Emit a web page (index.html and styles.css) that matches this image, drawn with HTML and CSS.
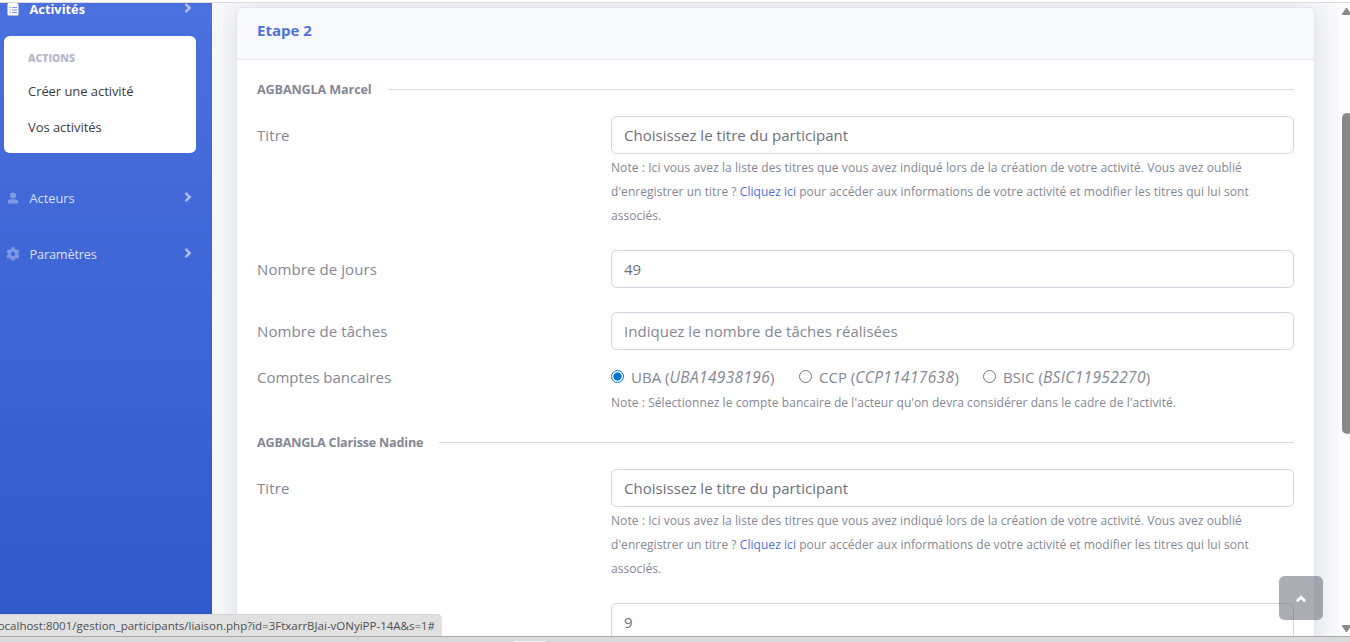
FILE: index.html
```html
<!DOCTYPE html>
<html lang="fr">
<head>
<meta charset="utf-8">
<title>Etape 2</title>
<link rel="stylesheet" href="styles.css">
</head>
<body>
<div class="window">
  <div class="page">
    <nav class="sidebar">
      <a class="nav-item active">
        <svg class="nav-icon" viewBox="0 0 12 14"><path fill="currentColor" d="M2 1h8a1.500 1.500 0 0 1 1.500 1.500v9.500a1.500 1.500 0 0 1-1.500 1.500H2A1.500 1.500 0 0 1 .5 12V2.500A1.500 1.500 0 0 1 2 1z"/><path stroke="#7d96e5" d="M2.500 5.500h1.300M5 5.500h5M2.500 8h1.300M5 8h5M2.500 10.500h1.300M5 10.500h5"/></svg>
        <span>Activités</span>
        <svg class="chevron" viewBox="0 0 8 12"><path d="M1.500 1.800 5.700 6l-4.200 4.200"/></svg>
      </a>
      <div class="submenu">
        <h6>ACTIONS</h6>
        <a>Créer une activité</a>
        <a>Vos activités</a>
      </div>
      <a class="nav-item acteurs">
        <svg class="nav-icon faded" viewBox="0 0 12 14"><circle cx="6" cy="4.500" r="3" fill="currentColor"/><path fill="currentColor" d="M.7 12.500v-1.300A3.200 3.200 0 0 1 3.900 8.200h4.200a3.200 3.200 0 0 1 3.200 3v1.300z"/></svg>
        <span>Acteurs</span>
        <svg class="chevron" viewBox="0 0 8 12"><path d="M1.500 1.800 5.700 6l-4.200 4.200"/></svg>
      </a>
      <a class="nav-item parametres">
        <svg class="nav-icon gear faded" viewBox="0 0 512 512"><path fill="currentColor" d="M487.400 315.700l-42.600-24.600c4.300-23.200 4.300-47 0-70.200l42.600-24.600c4.900-2.800 7.100-8.600 5.500-14-11.100-35.600-30-67.800-54.700-94.600-3.800-4.100-10-5.100-14.800-2.300L380.800 110c-17.900-15.400-38.500-27.300-60.800-35.100V25.800c0-5.600-3.900-10.500-9.400-11.700-36.700-8.200-74.300-7.800-109.200 0-5.500 1.200-9.400 6.100-9.400 11.700V75c-22.200 7.900-42.800 19.800-60.800 35.100L88.700 85.500c-4.900-2.800-11-1.900-14.800 2.300-24.700 26.700-43.600 58.900-54.700 94.600-1.700 5.400.6 11.200 5.500 14L67.300 221c-4.300 23.200-4.300 47 0 70.200l-42.600 24.600c-4.900 2.800-7.100 8.600-5.500 14 11.100 35.600 30 67.800 54.700 94.600 3.800 4.100 10 5.100 14.800 2.300l42.600-24.600c17.900 15.400 38.500 27.300 60.800 35.100v49.200c0 5.600 3.900 10.500 9.400 11.700 36.700 8.200 74.300 7.800 109.200 0 5.500-1.200 9.400-6.100 9.400-11.700v-49.200c22.200-7.900 42.800-19.800 60.800-35.100l42.600 24.600c4.900 2.800 11 1.900 14.800-2.300 24.700-26.700 43.600-58.900 54.700-94.600 1.500-5.500-.7-11.300-5.600-14.100zM256 336c-44.100 0-80-35.900-80-80s35.900-80 80-80 80 35.900 80 80-35.900 80-80 80z"/></svg>
        <span>Paramètres</span>
        <svg class="chevron" viewBox="0 0 8 12"><path d="M1.500 1.800 5.700 6l-4.200 4.200"/></svg>
      </a>
    </nav>
    <main class="content">
      <section class="card">
        <header class="card-header"><h2>Etape 2</h2></header>
        <div class="card-body">
          <div class="participant">
            <div class="divider"><b>AGBANGLA Marcel</b></div>
            <div class="row row-title">
              <label>Titre</label>
              <div>
                <div class="field select">Choisissez le titre du participant</div>
                <p class="note">Note : Ici vous avez la liste des titres que vous avez indiqué lors de la création de votre activité. Vous avez oublié<br><span class="second-line">d'enregistrer un titre ? <a>Cliquez ici</a> pour accéder aux informations de votre activité et modifier les titres qui lui sont</span><br>associés.</p>
              </div>
            </div>
            <div class="row row-days"><label>Nombre de jours</label><div class="field">49</div></div>
            <div class="row row-tasks"><label>Nombre de tâches</label><div class="field placeholder">Indiquez le nombre de tâches réalisées</div></div>
            <div class="row row-bank">
              <label class="bank-label">Comptes bancaires</label>
              <div>
                <div class="radios">
                  <span class="option uba"><i class="radio checked"></i><span>UBA (<em>UBA14938196</em>)</span></span>
                  <span class="option ccp"><i class="radio"></i><span>CCP (<em>CCP11417638</em>)</span></span>
                  <span class="option bsic"><i class="radio"></i><span>BSIC (<em>BSIC11952270</em>)</span></span>
                </div>
                <p class="note">Note : Sélectionnez le compte bancaire de l'acteur qu'on devra considérer dans le cadre de l'activité.</p>
              </div>
            </div>
          </div>
          <div class="participant">
            <div class="divider long"><b>AGBANGLA Clarisse Nadine</b></div>
            <div class="row row-title">
              <label>Titre</label>
              <div>
                <div class="field select">Choisissez le titre du participant</div>
                <p class="note">Note : Ici vous avez la liste des titres que vous avez indiqué lors de la création de votre activité. Vous avez oublié<br><span class="second-line">d'enregistrer un titre ? <a>Cliquez ici</a> pour accéder aux informations de votre activité et modifier les titres qui lui sont</span><br>associés.</p>
              </div>
            </div>
            <div class="row row-days"><label></label><div class="field">9</div></div>
          </div>
        </div>
      </section>
    </main>
    <div class="scrollbar">
      <svg class="arrow" viewBox="0 0 8 7"><path fill="#8a8a8a" d="M4 0h1l4 6v1H0V6z"/></svg>
      <div class="thumb"></div>
      <svg class="arrow" viewBox="0 0 8 7"><path fill="#8a8a8a" d="M4 7h1l4-6V0H0v1z"/></svg>
    </div>
    <a class="to-top"><svg viewBox="0 0 12 8"><path d="M1.800 6.300 6 2.200l4.200 4.100"/></svg></a>
    <div class="status"><span>localhost:8001/gestion_participants/liaison.php?id=3FtxarrBJai-vONyiPP-14A&amp;s=1#</span></div>
  </div>
  <div class="taskbar"><i></i></div>
</div>
</body>
</html>
```
FILE: styles.css
```css
* { box-sizing: border-box; }
body { margin: 0; font: 16px/24px "Open Sans", "Noto Sans", sans-serif; color: #858796; background: #fff; }
h2, h6, p { margin: 0; }
.window { width: 1350px; height: 642px; display: flex; flex-direction: column; overflow: hidden; padding-top: 2px; }
.page { position: relative; height: 634px; flex: none; display: flex; border-top: 1px solid #dcdcdc; overflow: hidden; background: #f8f9fc; white-space: nowrap; }

.sidebar { width: 212px; flex: none; overflow: hidden; background: linear-gradient(180deg, #4b70df 0, #3059ca 100%); }
.nav-item { display: flex; align-items: center; height: 24px; padding: 0 20px 0 7px; color: rgba(255,255,255,.8); font-size: 12.800px; }
.nav-item span { flex: 1; padding-left: 10.500px; }
.nav-icon { width: 12px; height: 14px; flex: none; fill: none; }
.nav-icon.gear { width: 14px; margin: 0 -1px; }
.faded { color: rgba(255,255,255,.32); }
.active { color: #fff; font-weight: 700; margin-top: -6px; }
.parametres { letter-spacing: -.2px; }
.chevron { width: 8px; height: 12px; fill: none; stroke: rgba(255,255,255,.55); stroke-width: 2.600px; position: relative; top: -1px; }
.submenu { margin: 15px 16px 0 4px; height: 117px; padding: 14px 24px; border-radius: 5.600px; background: #fff; display: flex; flex-direction: column; color: #3a3b45; font-size: 13px; letter-spacing: -.06px; }
.submenu h6 { font-size: 10.400px; line-height: 16px; font-weight: 800; color: #b7b9cc; margin-bottom: 7px; letter-spacing: 0; }
.submenu a { height: 36px; line-height: 37px; }
.acteurs { margin-top: 33px; }
.parametres { margin-top: 32px; }

.content { flex: 1; padding: 4px 23px 0 24px; overflow: hidden; }
.card { height: 700px; border: 1px solid #e3e6f0; border-radius: 5.600px; background: #fff; box-shadow: 0 2.400px 28px rgba(58,59,69,.15); }
.card-header { height: 52px; padding: 10px 20px; background: #f8f9fc; border-bottom: 1px solid #e3e6f0; border-radius: 5px 5px 0 0; }
.card-header h2 { font-size: 15px; line-height: 24px; font-weight: 700; color: #4e73df; }
.card-body { padding: 17px 20px; }
.participant { height: 353px; }
.divider { display: flex; align-items: center; font-size: 12.600px; letter-spacing: -.12px; height: 24px; margin-bottom: 15px; }
.divider b { line-height: 22px; padding-top: 2px; }
.divider.long { letter-spacing: -.2px; }
.divider::after { content: ""; flex: 1; height: 1px; margin-left: 16px; background: #dcdce0; }
.row { display: grid; grid-template-columns: 354px 683px; }
.row label { line-height: 38px; font-size: 15px; letter-spacing: .09px; }
.row-title { height: 134px; }
.row-days { height: 62px; }
.row-tasks { height: 53px; }
.row .bank-label { line-height: 24px; letter-spacing: 0; }
.field { height: 38px; line-height: 36px; padding: 0 12px; border: 1px solid #d1d3e2; border-radius: 5.600px; background: #fff; color: #6e707e; font-size: 15px; letter-spacing: .03px; }
.placeholder { color: #858796; }
.note { margin-top: 2px; font-size: 12px; letter-spacing: .07px; }
.second-line { letter-spacing: .055px; }
.note a { color: #4e73df; }
.radios { display: flex; height: 24px; font-size: 15px; }
.radios em { font-size: 15.500px; line-height: 20px; letter-spacing: .35px; }
.option { display: flex; align-items: center; flex: none; }
.uba { width: 188px; }
.ccp { width: 184px; }
.radio { width: 13px; height: 13px; margin: -2px 7px 0 0; border: 1px solid #767676; border-radius: 50%; }
.radio.checked { border-color: #0075d6; background: radial-gradient(circle, #0075d6 0 3.800px, #fff 4.400px); }

.scrollbar { width: 12px; flex: none; padding: 5px 0 4px 4px; display: flex; flex-direction: column; background: #fcfcfc; overflow: hidden; }
.arrow { width: 8px; height: 7px; flex: none; }
.thumb { width: 10px; height: 321px; flex: none; margin: 98px 0 191px; border-radius: 5px; background: #8a8a8a; }
.to-top { position: absolute; left: 1279px; top: 573px; width: 44px; height: 44px; border-radius: 5.600px; background: rgba(90,92,105,.5); display: flex; align-items: center; justify-content: center; }
.to-top svg { width: 12px; height: 8px; margin-top: 2px; fill: none; stroke: #fff; stroke-width: 2.800px; }
.status { position: absolute; left: 0; bottom: 0; width: 442px; height: 22px; padding-right: 7px; display: flex; justify-content: flex-end; overflow: hidden; border-top: 1px solid #d3d4d6; border-radius: 0 5px 0 0; background: #e1e1e1; color: #505050; font-size: 11.500px; line-height: 21px; }
.taskbar { height: 6px; flex: none; border-top: 1px solid #ababab; background: #dadada; }
.taskbar i { display: block; width: 31px; height: 2px; margin: 4px 0 0 514px; background: #f3f3f3; }
```
